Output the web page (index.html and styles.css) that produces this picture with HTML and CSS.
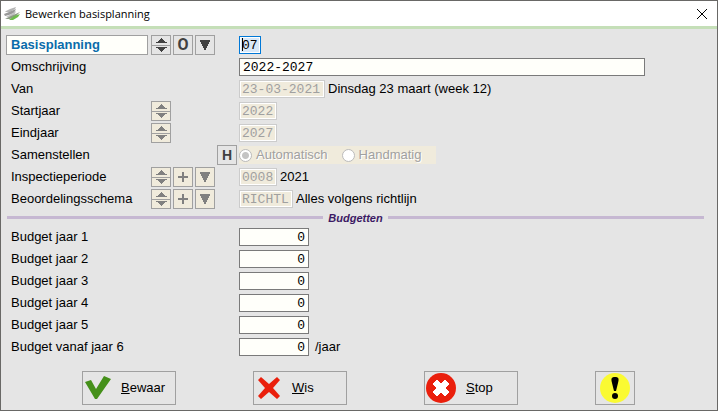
FILE: index.html
```html
<!DOCTYPE html>
<html lang="nl">
<head>
    <meta charset="UTF-8">
    <meta name="viewport" content="width=device-width, initial-scale=1.0">
    <title>Bewerken basisplanning</title>
    <link rel="stylesheet" href="styles.css">
</head>
<body>
    <!-- Shared button icons -->
    <svg class="icon-defs" aria-hidden="true">
        <symbol id="icon-up" viewBox="0 0 11 5">
            <path d="M5 0h1v1h1v1h1v1h1v1h2v1H0V4h2V3h1V2h1V1h1z"></path>
        </symbol>
        <symbol id="icon-down" viewBox="0 0 11 5">
            <path d="M0 0h11v1H9v1H8v1H7v1H6v1H5V4H4V3H3V2H2V1H0z"></path>
        </symbol>
        <symbol id="icon-list" viewBox="0 0 10 10">
            <path d="M0 0h10v2H9v2H8v2H7v2H6v2H4V8H3V6H2V4H1V2H0z"></path>
        </symbol>
        <symbol id="icon-plus" viewBox="0 0 10 10">
            <path d="M4 0h2v4h4v2H6v4H4V6H0V4h4z"></path>
        </symbol>
    </svg>

    <form class="window">
        <header class="titlebar">
            <svg class="logo" viewBox="0 0 16 14" aria-hidden="true">
                <path d="M2 4l4-2 6-2-1 2-5 3H1z" fill="#b4b4b4"></path>
                <path d="M0 7l5-2 7-3-2 4-5 2-4 1z" fill="#999"></path>
                <path d="M2 10l5-3 5-3-1 3-5 4z" fill="#c2c2c2"></path>
                <path d="M1 12l6-3 9-4-4 4-6 3z" fill="#8d9a86"></path>
                <path d="M5 13l5-4 6-2-2 3-5 3z" fill="#6dbb4c"></path>
            </svg>
            <h1>Bewerken basisplanning</h1>
            <button type="button" class="close" aria-label="Sluiten">
                <svg viewBox="0 0 10 10"><path d="M0 0l10 10M10 0L0 10"></path></svg>
            </button>
        </header>

        <main>
            <div class="rows">
                <div class="row">
                    <label class="name key" for="planning">Basisplanning</label>
                    <div class="tools">
                        <div class="spinner">
                            <button type="button" aria-label="Vorige planning"><svg><use href="#icon-up"></use></svg></button>
                            <button type="button" aria-label="Volgende planning"><svg><use href="#icon-down"></use></svg></button>
                        </div>
                        <button type="button" class="tool wide-letter">O</button>
                        <button type="button" class="tool" aria-label="Kies planning"><svg><use href="#icon-list"></use></svg></button>
                    </div>
                    <input type="text" id="planning" class="chars-2 active" value="07">
                </div>
                <div class="row">
                    <label class="name" for="omschrijving">Omschrijving</label>
                    <div class="tools"></div>
                    <input type="text" id="omschrijving" class="long" value="2022-2027">
                </div>
                <div class="row">
                    <label class="name" for="van">Van</label>
                    <div class="tools"></div>
                    <input type="text" id="van" class="chars-10" value="23-03-2021" disabled>
                    <span class="info">Dinsdag 23 maart (week 12)</span>
                </div>
                <div class="row">
                    <label class="name" for="startjaar">Startjaar</label>
                    <div class="tools">
                        <div class="spinner">
                            <button type="button" aria-label="Startjaar hoger" disabled><svg><use href="#icon-up"></use></svg></button>
                            <button type="button" aria-label="Startjaar lager" disabled><svg><use href="#icon-down"></use></svg></button>
                        </div>
                    </div>
                    <input type="text" id="startjaar" class="chars-4" value="2022" disabled>
                </div>
                <div class="row">
                    <label class="name" for="eindjaar">Eindjaar</label>
                    <div class="tools">
                        <div class="spinner">
                            <button type="button" aria-label="Eindjaar hoger" disabled><svg><use href="#icon-up"></use></svg></button>
                            <button type="button" aria-label="Eindjaar lager" disabled><svg><use href="#icon-down"></use></svg></button>
                        </div>
                    </div>
                    <input type="text" id="eindjaar" class="chars-4" value="2027" disabled>
                </div>
                <div class="row" role="radiogroup" aria-labelledby="samenstellen">
                    <span class="name" id="samenstellen">Samenstellen</span>
                    <div class="tools">
                        <button type="button" class="tool last">H</button>
                    </div>
                    <div class="choices">
                        <label><input type="radio" name="samenstellen" checked disabled>Automatisch</label>
                        <label><input type="radio" name="samenstellen" disabled>Handmatig</label>
                    </div>
                </div>
                <div class="row">
                    <label class="name" for="inspectieperiode">Inspectieperiode</label>
                    <div class="tools">
                        <div class="spinner">
                            <button type="button" aria-label="Vorige periode" disabled><svg><use href="#icon-up"></use></svg></button>
                            <button type="button" aria-label="Volgende periode" disabled><svg><use href="#icon-down"></use></svg></button>
                        </div>
                        <button type="button" class="tool" aria-label="Periode toevoegen" disabled><svg><use href="#icon-plus"></use></svg></button>
                        <button type="button" class="tool" aria-label="Kies periode" disabled><svg><use href="#icon-list"></use></svg></button>
                    </div>
                    <input type="text" id="inspectieperiode" class="chars-4" value="0008" disabled>
                    <span class="info">2021</span>
                </div>
                <div class="row">
                    <label class="name" for="schema">Beoordelingsschema</label>
                    <div class="tools">
                        <div class="spinner">
                            <button type="button" aria-label="Vorig schema" disabled><svg><use href="#icon-up"></use></svg></button>
                            <button type="button" aria-label="Volgend schema" disabled><svg><use href="#icon-down"></use></svg></button>
                        </div>
                        <button type="button" class="tool" aria-label="Schema toevoegen" disabled><svg><use href="#icon-plus"></use></svg></button>
                        <button type="button" class="tool" aria-label="Kies schema" disabled><svg><use href="#icon-list"></use></svg></button>
                    </div>
                    <input type="text" id="schema" class="chars-6" value="RICHTL" disabled>
                    <span class="info">Alles volgens richtlijn</span>
                </div>
            </div>

            <h2 class="divider">Budgetten</h2>

            <div class="rows">
                <div class="row">
                    <label class="name" for="budget1">Budget jaar 1</label>
                    <div class="tools"></div>
                    <input type="text" id="budget1" class="amount" value="0">
                </div>
                <div class="row">
                    <label class="name" for="budget2">Budget jaar 2</label>
                    <div class="tools"></div>
                    <input type="text" id="budget2" class="amount" value="0">
                </div>
                <div class="row">
                    <label class="name" for="budget3">Budget jaar 3</label>
                    <div class="tools"></div>
                    <input type="text" id="budget3" class="amount" value="0">
                </div>
                <div class="row">
                    <label class="name" for="budget4">Budget jaar 4</label>
                    <div class="tools"></div>
                    <input type="text" id="budget4" class="amount" value="0">
                </div>
                <div class="row">
                    <label class="name" for="budget5">Budget jaar 5</label>
                    <div class="tools"></div>
                    <input type="text" id="budget5" class="amount" value="0">
                </div>
                <div class="row">
                    <label class="name" for="budget6">Budget vanaf jaar 6</label>
                    <div class="tools"></div>
                    <input type="text" id="budget6" class="amount" value="0">
                    <span class="unit">/jaar</span>
                </div>
            </div>
        </main>

        <footer class="actions">
            <button type="button" class="action">
                <svg class="narrow" viewBox="0 0 27 30" aria-hidden="true"><path d="M1 9l6-2 5 9 8-13 7 3-14 20h-2z" fill="#45901a"></path></svg>
                <span><u>B</u>ewaar</span>
            </button>
            <button type="button" class="action">
                <svg class="narrow" viewBox="0 0 27 30" aria-hidden="true"><path d="M6 4l8 7 8-7 3 3-7 8 7 8-3 3-8-7-8 7-3-3 7-8-7-8z" fill="#ea1f0c"></path></svg>
                <span><u>W</u>is</span>
            </button>
            <button type="button" class="action">
                <svg viewBox="0 0 30 30" aria-hidden="true">
                    <circle cx="15" cy="15" r="15" fill="#ea1f0c"></circle>
                    <path d="M11 7l4 4 4-4 4 4-4 4 4 4-4 4-4-4-4 4-4-4 4-4-4-4z" fill="#fff" stroke="#fff" stroke-linejoin="round"></path>
                </svg>
                <span><u>S</u>top</span>
            </button>
            <button type="button" class="action notice" aria-label="Melding">
                <svg viewBox="0 0 30 30" aria-hidden="true">
                    <circle cx="15" cy="15" r="15" fill="#fafa32"></circle>
                    <path d="M15 4c4 0 4 2 3 6l-2 8h-2l-2-8c-1-4-1-6 3-6z"></path>
                    <circle cx="15" cy="23" r="3"></circle>
                </svg>
            </button>
        </footer>
    </form>
</body>
</html>
```
FILE: styles.css
```css
* {
    margin: 0;
    padding: 0;
    box-sizing: border-box;
}

body {
    font-family: "Liberation Sans", Arial, sans-serif;
    font-size: 13px;
    line-height: 18px;
    color: #000;
}

button {
    font: inherit;
    color: inherit;
    background: #e5e5e5;
    border: 1px solid #a0a0a0;
}

.icon-defs {
    display: none;
}

.window {
    display: flex;
    flex-direction: column;
    min-height: 100vh;
    border: 1px solid #696866;
    background: #e5e5e5;
}

/* Title bar */
.titlebar {
    display: flex;
    align-items: center;
    height: 28px;
    padding: 0 10px 0 3px;
    background: #fff;
    border-bottom: 3px solid #c5dfb8;
}

.logo {
    width: 16px;
    height: 14px;
    margin-right: 5px;
}

.titlebar h1 {
    flex: 1;
    font-family: "Open Sans", "Noto Sans", sans-serif;
    font-size: 11px;
    font-weight: 400;
}

.close {
    display: flex;
    background: none;
    border: none;
}

.close svg {
    width: 10px;
    height: 10px;
    overflow: visible;
    stroke: #000;
}

/* Form rows */
main {
    padding-top: 6px;
}

.rows {
    display: flex;
    flex-direction: column;
    gap: 2px;
    padding-left: 5px;
}

.row {
    display: flex;
    align-items: center;
    height: 20px;
}

.name {
    flex: 0 0 142px;
    margin-right: 3px;
    padding-left: 4px;
    border: 1px solid transparent;
}

.key {
    font-weight: 700;
    color: #0a6cab;
    background: #fffffa;
    border-color: #a0a0a0;
}

.tools {
    display: flex;
    flex: 0 0 88px;
    gap: 2px;
}

.tool,
.spinner {
    display: flex;
    align-items: center;
    justify-content: center;
    width: 20px;
    height: 20px;
    color: #404040;
}

.tool {
    font-size: 14px;
    font-weight: 700;
}

.wide-letter {
    font-family: Roboto, "Liberation Sans", sans-serif;
    font-size: 16px;
}

.last {
    margin-left: 66px;
}

.tool svg {
    width: 10px;
    height: 10px;
}

.tool svg,
.spinner svg {
    fill: currentColor;
}

.spinner {
    flex-direction: column;
}

.spinner button {
    display: flex;
    flex: 1;
    align-items: center;
    justify-content: center;
    width: 20px;
}

.spinner button + button {
    border-top: none;
}

.spinner svg {
    width: 11px;
    height: 5px;
}

button:disabled {
    color: #808080;
    background: #f0ebdc;
}

input[type="text"] {
    height: 18px;
    padding: 0 3px;
    font-family: "Liberation Mono", "Courier New", monospace;
    font-size: 13px;
    color: #000;
    background: #fffffa;
    border: 1px solid #7a7a7a;
    outline: none;
}

input[type="text"]:disabled {
    padding: 0 2px;
    color: #a0a0a0;
    background: #f0ebdc;
    border-color: #ccc;
    box-shadow: inset 0 0 0 1px #fff;
}

/* Focused field with the cursor before the first character */
input[type="text"].active {
    padding: 0 2px;
    background: linear-gradient(#000, #000) 2px 1px / 1px 13px no-repeat #d8e8f8;
    border-color: #0078d7;
    box-shadow: inset 0 0 0 1px #fff;
}

input[type="text"].chars-2 {
    width: 22px;
}

input[type="text"].chars-4 {
    width: 38px;
}

input[type="text"].chars-6 {
    width: 54px;
}

input[type="text"].chars-10 {
    width: 86px;
}

input[type="text"].long {
    flex: 0 1 406px;
    min-width: 0;
}

input[type="text"].amount {
    width: 70px;
    text-align: right;
}

.info {
    margin-left: 3px;
}

.unit {
    margin-left: 6px;
}

.choices {
    display: flex;
    gap: 14px;
    height: 18px;
    padding-right: 15px;
    color: #a0a0a0;
    text-shadow: 1px 1px 0 #fff;
    background: #f0ebdc;
}

.choices label {
    display: flex;
    align-items: center;
    gap: 4px;
}

.choices input {
    appearance: none;
    width: 13px;
    height: 13px;
    background: #fff;
    border: 1px solid #bbb;
    border-radius: 50%;
}

.choices input:checked {
    background: radial-gradient(circle, #c4c4c4 3px, #fff 4px);
}

.divider {
    display: flex;
    align-items: center;
    gap: 5px;
    height: 17px;
    margin: 0 13px 1px 6px;
    font-size: 11px;
    font-style: italic;
    color: #3c1a64;
}

.divider::before,
.divider::after {
    content: "";
    flex: 1;
    height: 3px;
    background: #c6b8d2;
}

/* Bottom buttons */
.actions {
    display: flex;
    flex-wrap: wrap;
    justify-content: center;
    gap: 5px 77px;
    padding: 14px 1px 5px 0;
}

.action {
    display: flex;
    align-items: center;
    gap: 10px;
    width: 94px;
    height: 34px;
    padding: 0 1px;
}

.action svg {
    width: 30px;
    height: 30px;
}

.action .narrow {
    width: 27px;
}

.notice {
    justify-content: center;
    width: 40px;
}
```
